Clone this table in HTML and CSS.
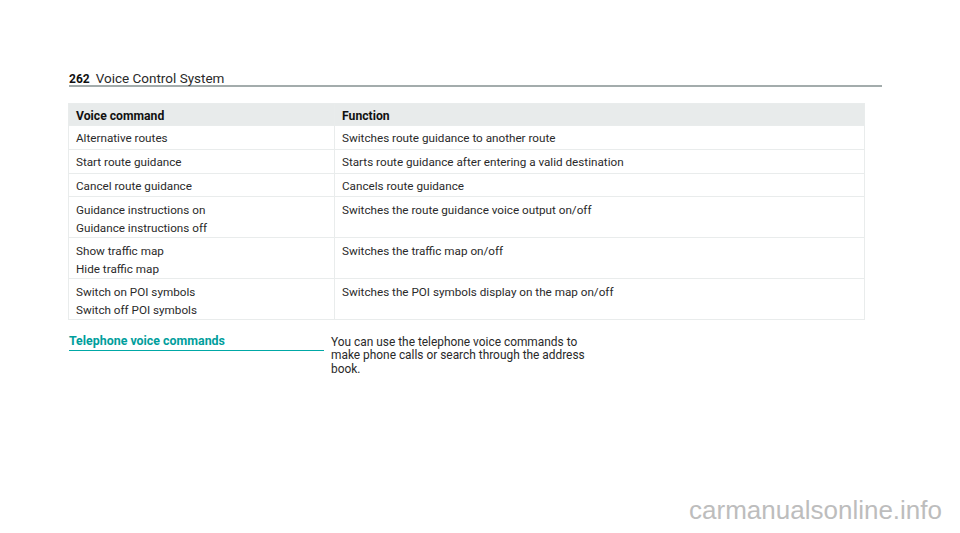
FILE: index.html
```html
<!DOCTYPE html>
<html>
<head>
<meta charset="utf-8">
<link rel="stylesheet" href="styles.css">
</head>
<body>
<div class="page">
  <header class="running-head">
    <span class="pnum">262</span><span class="ptitle">Voice Control System</span>
  </header>
  <table class="cmds">
    <thead>
      <tr><th class="c1">Voice command</th><th>Function</th></tr>
    </thead>
    <tbody>
      <tr><td class="c1">Alternative routes</td><td>Switches route guidance to another route</td></tr>
      <tr><td class="c1">Start route guidance</td><td>Starts route guidance after entering a valid destination</td></tr>
      <tr class="short"><td class="c1">Cancel route guidance</td><td>Cancels route guidance</td></tr>
      <tr class="tall"><td class="c1">Guidance instructions on<br>Guidance instructions off</td><td>Switches the route guidance voice output on/off</td></tr>
      <tr class="tall t41"><td class="c1">Show traffic map<br>Hide traffic map</td><td>Switches the traffic map on/off</td></tr>
      <tr class="tall"><td class="c1">Switch on POI symbols<br>Switch off POI symbols</td><td>Switches the POI symbols display on the map on/off</td></tr>
    </tbody>
  </table>
  <section class="tel">
    <h2 class="tel-head">Telephone voice commands</h2>
    <p class="tel-text">You can use the telephone voice commands to<br>make phone calls or search through the address<br>book.</p>
  </section>
  <div class="watermark">carmanualsonline.info</div>
</div>
</body>
</html>
```

FILE: styles.css
```css
html, body { margin: 0; padding: 0; background: #fff; }
body { font-family: Roboto, "Liberation Sans", sans-serif; color: #2a2a2a; }
.page { width: 960px; height: 533px; position: relative; overflow: hidden; }
.running-head {
  margin: 71px 0 0 69px;
  width: 813px;
  height: 14px;
  border-bottom: 2px solid #a3acac;
  font-size: 13.5px;
  line-height: 14px;
  padding-bottom: 0;
}
.pnum { font-weight: bold; font-size: 12px; color: #111; margin-right: 6px; }
.ptitle { color: #2a2a2a; }
.cmds {
  margin: 16px 0 0 68px;
  width: 797px;
  border-collapse: collapse;
  font-size: 11.7px;
  color: #2a2a2a;
}
.cmds th, .cmds td {
  text-align: left;
  padding: 0 7px;
  vertical-align: top;
  border: 1px solid #e9ecec;
  line-height: 16px;
}
.cmds th { background: #e8ebeb; font-weight: bold; font-size: 12.2px; height: 22px; padding-top: 4px; box-sizing: border-box; color: #111; }
.cmds td { height: 24px; padding-top: 4px; box-sizing: border-box; }
.cmds tr.short td { height: 23px; }
.cmds tr.tall td { height: 39px; padding-top: 4px; line-height: 18px; }
.cmds tr.t41 td { height: 40px; }
.cmds .c1 { width: 266px; }
.tel { display: flex; align-items: flex-start; margin: 15px 0 0 69px; }
.tel-head {
  margin: 0;
  width: 255px;
  font-size: 12.4px;
  line-height: 12px;
  padding-bottom: 3px;
  color: #009e9c;
  font-weight: bold;
  border-bottom: 1px solid #00a8a6;
}
.tel-text {
  margin: 1px 0 0 7px;
  font-size: 11.9px;
  line-height: 13.3px;
  color: #2a2a2a;
}
.watermark {
  position: absolute;
  right: 18px;
  bottom: 7px;
  font-family: "Liberation Sans", Arial, sans-serif;
  font-size: 26px;
  color: #bdbdbd;
}
```
